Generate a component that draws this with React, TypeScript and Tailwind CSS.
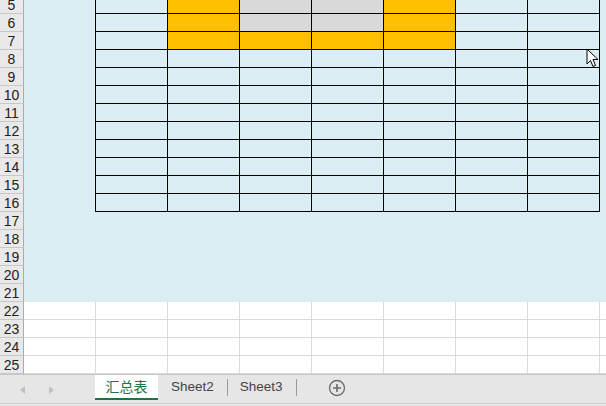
const rows = Array.from({ length: 21 }, (_, i) => i + 5);
const cols = ["A", "B", "C", "D", "E", "F", "G", "H", "I"];

// fill colours for the header block of the table
const fills: Record<number, Record<string, string>> = {
  5: { C: "bg-[#ffc000]", D: "bg-[#d9d9d9]", E: "bg-[#d9d9d9]", F: "bg-[#ffc000]" },
  6: { C: "bg-[#ffc000]", D: "bg-[#d9d9d9]", E: "bg-[#d9d9d9]", F: "bg-[#ffc000]" },
  7: { C: "bg-[#ffc000]", D: "bg-[#ffc000]", E: "bg-[#ffc000]", F: "bg-[#ffc000]" },
};

function cellClass(row: number, col: string) {
  const inBlue = row <= 21;
  const inTable = row <= 16 && col >= "B" && col <= "H";
  const leftEdge = row <= 16 && col === "A";
  let bg = inBlue ? "bg-[#daeef3]" : "bg-white";
  if (fills[row]?.[col]) bg = fills[row][col];

  let border = "";
  if (inTable) border = "border-r border-b border-black";
  else if (leftEdge) border = "border-r border-black";
  else if (!inBlue) border = "border-r border-b border-[#dadada]";

  const w = col === "I" ? "w-[7px]" : "w-[72px]";
  return `${w} h-[18px] shrink-0 box-border ${bg} ${border}`;
}

function Cursor() {
  return (
    <svg className="absolute left-[586px] top-[48px]" width="14" height="21" viewBox="0 0 14 21">
      <path d="M1 1 L1 16 L4.5 12.5 L7 18.5 L9.5 17.5 L7 11.5 L12 11.5 Z" fill="white" stroke="black" strokeWidth="1" strokeLinejoin="round" />
    </svg>
  );
}

export default function App() {
  return (
    <div className="relative w-[606px] h-[406px] overflow-hidden bg-white font-['Liberation_Sans',sans-serif]">
      <div className="h-[374px] overflow-hidden">
        <div className="-mt-[4px]">
          {rows.map((r) => (
            <div key={r} className="flex">
              <div className="w-[24px] h-[18px] shrink-0 box-border overflow-hidden bg-[#e9e9e9] border-r border-b border-r-[#ababab] border-b-[#c8c8c8] text-[#222] text-[14px] leading-[19px] text-center">
                {r}
              </div>
              {cols.map((c) => (
                <div key={c} className={cellClass(r, c)} />
              ))}
            </div>
          ))}
        </div>
      </div>

      <div className="h-[32px] bg-[#e6e6e6] border-t border-[#c6c6c6] flex items-start">
        <div className="w-[95px] h-[29px] flex items-center">
          <span className="ml-[20px] w-0 h-0 border-y-[4px] border-y-transparent border-r-[5px] border-r-[#c0c0c0]" />
          <span className="ml-[24px] w-0 h-0 border-y-[4px] border-y-transparent border-l-[5px] border-l-[#c0c0c0]" />
        </div>
        <div className="w-[63px] h-[25px] bg-white border-b-2 border-[#217346] flex items-center justify-center text-[14px] text-[#217346] font-['Noto_Sans_CJK_SC',sans-serif]">
          汇总表
        </div>
        <div className="flex items-center h-[25px] text-[13.5px] text-[#444]">
          <span className="pl-[13px] pr-[13px]">Sheet2</span>
          <span className="w-px h-[17px] bg-[#9a9a9a]" />
          <span className="pl-[12px] pr-[13px]">Sheet3</span>
          <span className="w-px h-[17px] bg-[#9a9a9a]" />
          <svg className="ml-[31px]" width="18" height="18" viewBox="0 0 18 18">
            <circle cx="9" cy="9" r="7.5" fill="none" stroke="#6b6b6b" strokeWidth="1.3" />
            <path d="M9 5 V13 M5 9 H13" stroke="#6b6b6b" strokeWidth="1.6" />
          </svg>
        </div>
      </div>

      <div className="absolute left-0 top-[403px] w-full h-px bg-[#d0d0d0]" />
      <Cursor />
    </div>
  );
}
